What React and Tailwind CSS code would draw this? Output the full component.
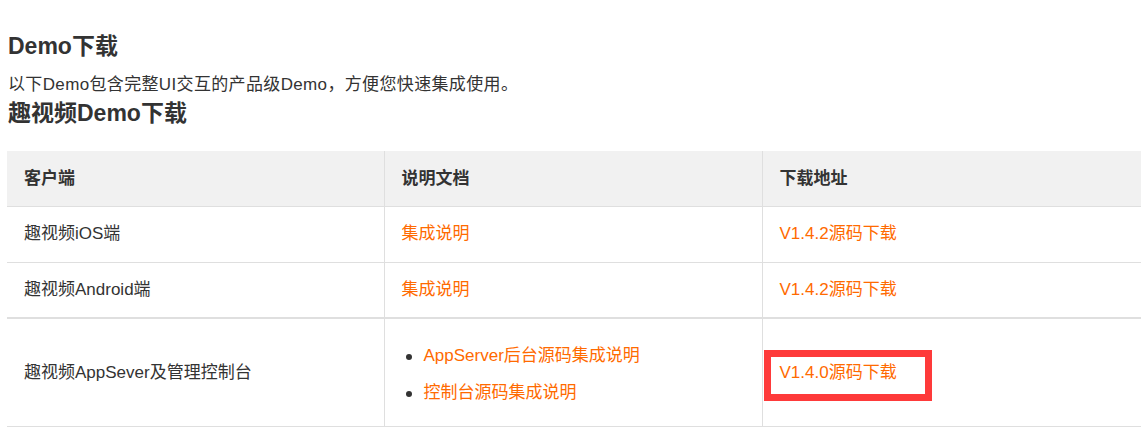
const font = { fontFamily: '"Liberation Sans", Arial, "Noto Sans CJK SC", sans-serif' };

const rows = [
  { client: '趣视频iOS端', docs: ['集成说明'], download: 'V1.4.2源码下载' },
  { client: '趣视频Android端', docs: ['集成说明'], download: 'V1.4.2源码下载' },
];

export default function App() {
  return (
    <div className="bg-white px-[7px] pt-[30px] text-[#333]" style={font}>
      <h1 className="pl-px text-[23px] font-bold leading-8 text-[#333]">Demo下载</h1>
      <p className="mt-[11px] pl-px text-[17px] leading-6 tracking-[0.35px]">
        以下Demo包含完整UI交互的产品级Demo，方便您快速集成使用。
      </p>
      <h2 className="pl-px text-[23px] font-bold leading-8 text-[#333]">趣视频Demo下载</h2>

      <table className="mt-[22px] w-[1134px] table-fixed border-collapse text-[17px]">
        <colgroup>
          <col className="w-[377px]" />
          <col className="w-[378px]" />
          <col className="w-[379px]" />
        </colgroup>
        <thead>
          <tr className="h-[55px] bg-[#f1f1f1] text-left">
            <th className="px-[17px] font-bold">客户端</th>
            <th className="border-l border-[#dfdfdf] px-[17px] font-bold">说明文档</th>
            <th className="border-l border-[#dfdfdf] px-[17px] font-bold">下载地址</th>
          </tr>
        </thead>
        <tbody>
          {rows.map((row, i) => (
            <tr
              key={row.client}
              className={`h-[56px] border-t border-[#dfdfdf] ${i === 1 ? 'border-b-2' : ''}`}
            >
              <td className="px-[17px]">{row.client}</td>
              <td className="border-l border-[#dfdfdf] px-[17px] text-[#ff6a00]">{row.docs[0]}</td>
              <td className="border-l border-[#dfdfdf] px-[17px] text-[#ff6a00]">{row.download}</td>
            </tr>
          ))}
          <tr className="h-[108px] border-b border-[#dfdfdf]">
            <td className="px-[17px]">趣视频AppSever及管理控制台</td>
            <td className="border-l border-[#dfdfdf] px-[17px]">
              <ul className="flex flex-col gap-[13px] pl-[22px] pt-[4px] text-[#ff6a00]">
                <li className="relative leading-6">
                  <span className="absolute left-[-18px] top-[10px] h-[6px] w-[6px] rounded-full bg-[#333]" />
                  AppServer后台源码集成说明
                </li>
                <li className="relative leading-6">
                  <span className="absolute left-[-18px] top-[10px] h-[6px] w-[6px] rounded-full bg-[#333]" />
                  控制台源码集成说明
                </li>
              </ul>
            </td>
            <td className="relative border-l border-[#dfdfdf] px-[17px] text-[#ff6a00]">
              V1.4.0源码下载
              <div className="pointer-events-none absolute left-[1px] top-[31px] h-[51px] w-[168px] border-[7px] border-[#fe3a3a]" />
            </td>
          </tr>
        </tbody>
      </table>
    </div>
  );
}
